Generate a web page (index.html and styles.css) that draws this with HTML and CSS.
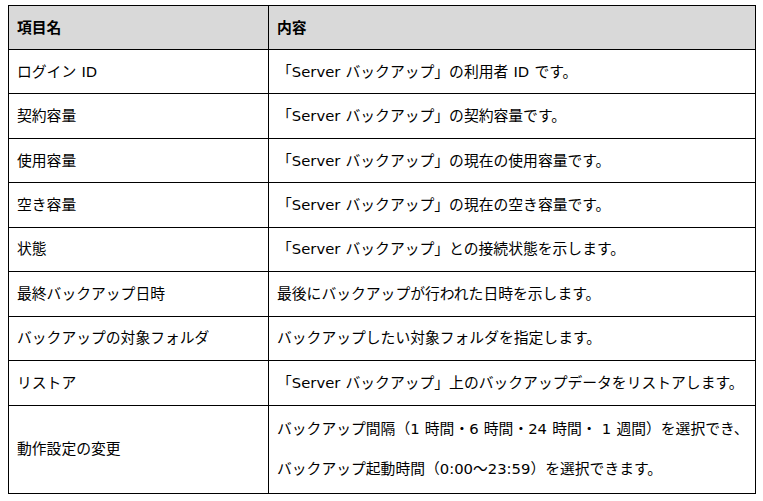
FILE: index.html
```html
<!DOCTYPE html>
<html lang="ja">
<head>
<meta charset="utf-8">
<link rel="stylesheet" href="styles.css">
</head>
<body>
<table class="spec">
  <thead>
    <tr><th class="name">項目名</th><th>内容</th></tr>
  </thead>
  <tbody>
    <tr><td>ログイン ID</td><td>「Server バックアップ」の利用者 ID です。</td></tr>
    <tr><td>契約容量</td><td>「Server バックアップ」の契約容量です。</td></tr>
    <tr><td>使用容量</td><td>「Server バックアップ」の現在の使用容量です。</td></tr>
    <tr><td>空き容量</td><td>「Server バックアップ」の現在の空き容量です。</td></tr>
    <tr><td>状態</td><td>「Server バックアップ」との接続状態を示します。</td></tr>
    <tr><td>最終バックアップ日時</td><td>最後にバックアップが行われた日時を示します。</td></tr>
    <tr><td>バックアップの対象フォルダ</td><td>バックアップしたい対象フォルダを指定します。</td></tr>
    <tr><td>リストア</td><td>「Server バックアップ」上のバックアップデータをリストアします。</td></tr>
    <tr class="tall"><td>動作設定の変更</td><td><p>バックアップ間隔（1 時間・6 時間・24 時間・ 1 週間）を選択でき、</p><p>バックアップ起動時間（0:00～23:59）を選択できます。</p></td></tr>
  </tbody>
</table>
</body>
</html>
```
FILE: styles.css
```css
html, body {
  margin: 0;
  padding: 0;
  background: #fff;
}
body {
  padding: 5px 0 0 8px;
  font-family: "DejaVu Sans", "Noto Sans CJK JP", sans-serif;
  font-size: 14.8px;
  word-spacing: 0.5px;
  color: #000;
}
.spec {
  border-collapse: collapse;
  width: 748px;
  table-layout: fixed;
}
.spec th, .spec td {
  border: 1px solid #000;
  padding: 0 8px;
  height: 44.45px;
  box-sizing: border-box;
  text-align: left;
  vertical-align: middle;
  white-space: nowrap;
  line-height: 20px;
}
.spec th {
  background: #d9d9d9;
  font-weight: bold;
  height: 44px;
}
.spec .name {
  width: 260px;
}
.spec .tall td {
  height: 88px;
}
.spec p {
  margin: 0;
}
.spec p + p {
  margin-top: 20px;
}
```
